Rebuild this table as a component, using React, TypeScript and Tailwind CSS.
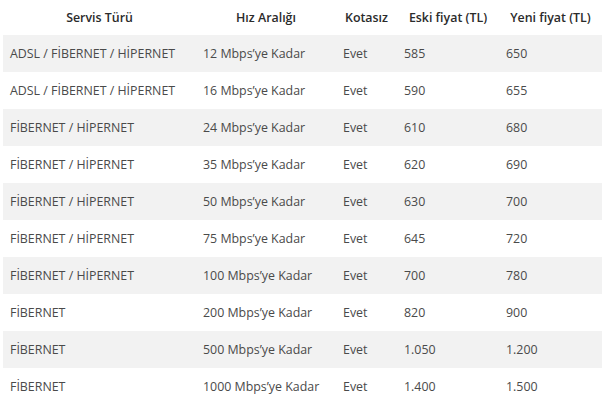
import React from 'react';

const rows = [
  ['ADSL / FİBERNET / HİPERNET', '12 Mbps’ye Kadar', 'Evet', '585', '650'],
  ['ADSL / FİBERNET / HİPERNET', '16 Mbps’ye Kadar', 'Evet', '590', '655'],
  ['FİBERNET / HİPERNET', '24 Mbps’ye Kadar', 'Evet', '610', '680'],
  ['FİBERNET / HİPERNET', '35 Mbps’ye Kadar', 'Evet', '620', '690'],
  ['FİBERNET / HİPERNET', '50 Mbps’ye Kadar', 'Evet', '630', '700'],
  ['FİBERNET / HİPERNET', '75 Mbps’ye Kadar', 'Evet', '645', '720'],
  ['FİBERNET / HİPERNET', '100 Mbps’ye Kadar', 'Evet', '700', '780'],
  ['FİBERNET', '200 Mbps’ye Kadar', 'Evet', '820', '900'],
  ['FİBERNET', '500 Mbps’ye Kadar', 'Evet', '1.050', '1.200'],
  ['FİBERNET', '1000 Mbps’ye Kadar', 'Evet', '1.400', '1.500'],
];

const headers = ['Servis Türü', 'Hız Aralığı', 'Kotasız', 'Eski fiyat (TL)', 'Yeni fiyat (TL)'];
const widths = ['w-[193px]', 'w-[140px]', 'w-[61px]', 'w-[102px]', 'w-[103px]'];

export default function App() {
  return (
    <div className="w-[614px] h-[402px] overflow-hidden bg-white font-['Open_Sans',sans-serif] text-[12.4px]">
      <table className="table-fixed border-collapse w-[599px] ml-[3px]">
        <thead>
          <tr className="h-[35px]">
            {headers.map((h, i) => (
              <th key={h} className={`${widths[i]} pt-[2px] text-center font-semibold text-[#2b2b2b]`}>
                {h}
              </th>
            ))}
          </tr>
        </thead>
        <tbody>
          {rows.map((r, idx) => (
            <tr key={idx} className={`h-[37px] ${idx % 2 === 0 ? 'bg-[#f2f2f2]' : 'bg-white'}`}>
              {r.map((c, j) => (
                <td key={j} className="pl-[7px] pt-[2px] text-left text-[#4a4a4a] whitespace-nowrap">
                  {c}
                </td>
              ))}
            </tr>
          ))}
        </tbody>
      </table>
    </div>
  );
}
